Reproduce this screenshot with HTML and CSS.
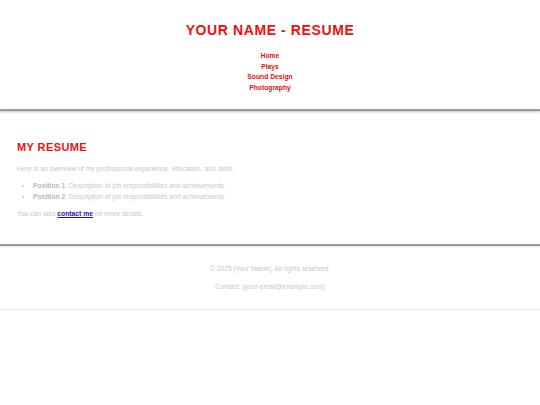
FILE: index.html
```html
<!DOCTYPE html>
<html lang="en">
<head>
<meta charset="utf-8">
<title>Your Name - Resume</title>
<link rel="stylesheet" href="styles.css">
</head>
<body>
  <header class="site-header">
    <h1 class="site-title">YOUR NAME - RESUME</h1>
    <nav class="site-nav">
      <ul>
        <li><a href="#">Home</a></li>
        <li><a href="#">Plays</a></li>
        <li><a href="#">Sound Design</a></li>
        <li><a href="#">Photography</a></li>
      </ul>
    </nav>
  </header>

  <main class="content">
    <h2 class="section-title">MY RESUME</h2>
    <p>Here is an overview of my professional experience, education, and skills.</p>
    <ul class="positions">
      <li><strong>Position 1</strong>: Description of job responsibilities and achievements.</li>
      <li><strong>Position 2</strong>: Description of job responsibilities and achievements.</li>
    </ul>
    <p>You can also <a class="contact-link" href="#">contact me</a> for more details.</p>
  </main>

  <footer class="site-footer">
    <p>&copy; 2025 [Your Name]. All rights reserved.</p>
    <p>Contact: [your-email@example.com]</p>
  </footer>
</body>
</html>
```

FILE: styles.css
```css
html, body {
  margin: 0;
  padding: 0;
  background: #fff;
}

body {
  font-family: "Liberation Sans", Arial, sans-serif;
  font-size: 6.75px;
  color: #c8c8c8;
}

/* Header with title and stacked navigation */
.site-header {
  text-align: center;
  padding: 21px 0 15px;
  border-bottom: 2px solid #9a9a9a;
  box-shadow: 0 1px 2px rgba(0, 0, 0, 0.25);
}

.site-title {
  margin: 0 0 12px;
  font-size: 14px;
  line-height: 18px;
  letter-spacing: 0.6px;
  color: #f01010;
  font-weight: bold;
}

.site-nav ul {
  list-style: none;
  margin: 0;
  padding: 0;
}

.site-nav li {
  line-height: 10.7px;
}

.site-nav a {
  color: #e01010;
  font-weight: bold;
  text-decoration: none;
}

/* Main resume section */
.content {
  padding: 28px 17px 25px;
}

.section-title {
  margin: 0 0 8px;
  font-size: 11px;
  line-height: 16px;
  letter-spacing: 0.4px;
  color: #f01010;
  font-weight: bold;
}

.content p {
  margin: 0;
  line-height: 11px;
}

.positions {
  margin: 6px 0 6px;
  padding-left: 16px;
}

.positions li {
  line-height: 11px;
}

.positions strong {
  color: #b8b8b8;
}

.contact-link {
  color: #1a0dcc;
  font-weight: bold;
  text-decoration: underline;
}

/* Footer */
.site-footer {
  text-align: center;
  padding: 17px 0 17px;
  border-top: 2px solid #9a9a9a;
  border-bottom: 1px solid #ececec;
  box-shadow: inset 0 1px 0 rgba(0, 0, 0, 0.12);
}

.site-footer p {
  margin: 0;
  line-height: 11px;
}

.site-footer p + p {
  margin-top: 7px;
}
```
